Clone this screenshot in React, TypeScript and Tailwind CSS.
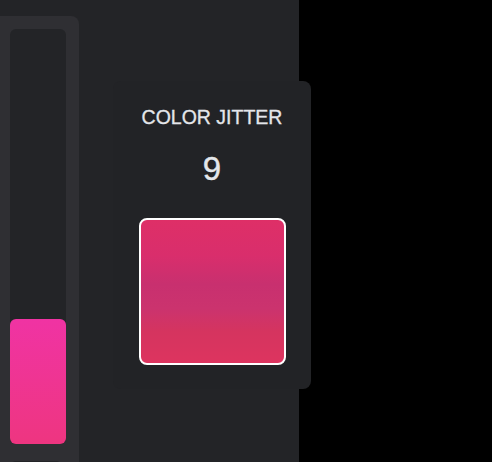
import React from "react";

const App = (): JSX.Element => {
  return (
    <div className="w-full h-[462px] bg-black overflow-hidden" style={{ fontFamily: '"Liberation Sans", Arial, sans-serif' }}>
      <div className="w-[299px] h-full bg-[#232427] flex items-start">
        {/* slider panel */}
        <div className="w-[79px] h-[470px] mt-[16px] bg-[#2f2f33] rounded-tr-lg pl-[10px] pt-[13px] flex flex-col gap-[17px] shrink-0">
          <div className="w-[56px] h-[415px] shrink-0 bg-[#232427] rounded-md flex flex-col justify-end">
            <div className="h-[125px] rounded-md bg-gradient-to-b from-[#f033a3] to-[#ee3580]" />
          </div>
          <div className="w-[52px] h-[40px] shrink-0 bg-[#232427] rounded-t-md" />
        </div>

        {/* jitter card */}
        <div className="ml-[34px] mt-[81px] w-[198px] h-[308px] shrink-0 bg-[#222326] rounded-lg flex flex-col items-center pt-[24px]">
          <p className="text-[19.5px] leading-[24px] text-[#e4e6ea] [-webkit-text-stroke:0.3px_#e4e6ea]">COLOR JITTER</p>
          <p className="mt-[20px] text-[33px] leading-[40px] text-[#e4e6ea] [-webkit-text-stroke:0.4px_#e4e6ea]">9</p>
          <div className="mt-[29px] w-[147px] h-[147px] rounded-lg border-2 border-white bg-[linear-gradient(to_bottom,#de2f67_0%,#d92e6c_25%,#c8306f_45%,#cb336e_62%,#d5345f_78%,#dd345f_100%)]" />
        </div>
      </div>
    </div>
  );
};

export default App;
